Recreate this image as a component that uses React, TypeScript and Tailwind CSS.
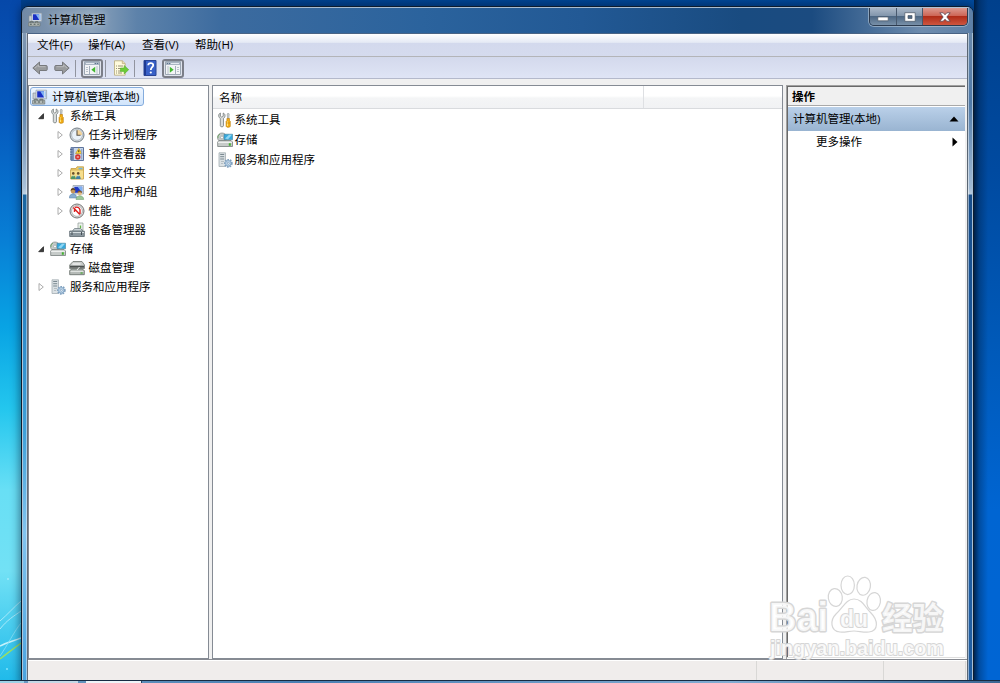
import React from 'react';

type IconProps = { className?: string };

interface TreeNode {
  label: string;
  icon: React.FC<IconProps>;
  level: number;
  arrow?: 'open' | 'closed';
  selected?: boolean;
}

/* ===================== ICONS ===================== */

const ComputerIcon: React.FC<IconProps> = ({ className }) => (
  <svg viewBox="0 0 16 16" className={className}>
    <path d="M1 4h4v6H1z" fill="#c9cfd4" stroke="#7f878d" strokeWidth=".6" />
    <path d="M4 1.2h10.6v8.6H4z" fill="#e4e9ee" stroke="#8d9aa8" strokeWidth=".7" />
    <path d="M5.2 2.3h6.8v6.2H5.2z" fill="#1a2fc4" />
    <path d="M8.2 2.3H12v6.2z" fill="#7fb2f4" />
    <path d="M12.6 2.3h1.4v6.2h-1.4z" fill="#a9c8ee" />
    <path d="M7 10h5l1 1.6H6z" fill="#a7b1ba" />
    <path d="M.6 11.4h12.2V15H.6z" fill="#b2b9b6" stroke="#6e7673" strokeWidth=".7" />
    <path d="M2.4 11.5v-1.2h3v1.2M8 11.5v-1.2h2.6v1.2" fill="none" stroke="#687069" />
    <path d="M2 13h2M6 13h2M10 13h1.5" stroke="#4f5b57" strokeWidth="1.2" />
  </svg>
);

const ToolsIcon: React.FC<IconProps> = ({ className }) => (
  <svg viewBox="0 0 16 16" className={className}>
    <path
      d="M3.4 1v3.2l1.400.9 1.400-.9V1c1.500.700 2 1.800 1.800 3.200-.1 1-.7 1.800-1.500 2.200v7.400c0 1.400-3.200 1.400-3.200 0V6.400C2.400 6 1.800 5.200 1.700 4.200c-.2-1.400.300-2.500 1.700-3.200z"
      fill="#d9dcdb"
      stroke="#777d7d"
      strokeWidth=".8"
    />
    <path d="M11.200 1l1 1-.4 4.500h-1.200L10.200 2z" fill="#cfd3d4" stroke="#8a9090" strokeWidth=".6" />
    <path d="M9.900 6.500h2.600v2l.8.800v5c0 1.400-4.200 1.400-4.200 0v-5l.8-.8z" fill="#f3ae16" stroke="#b97a0b" strokeWidth=".6" />
    <path d="M10.500 9.500v4.500" stroke="#ffe37c" />
    <path d="M9.500 11h3.500" stroke="#c27f0c" strokeWidth=".6" />
  </svg>
);

const ClockIcon: React.FC<IconProps> = ({ className }) => (
  <svg viewBox="0 0 16 16" className={className}>
    <circle cx="8" cy="8" r="7" fill="#d5dade" stroke="#757e86" />
    <circle cx="8" cy="8" r="5.400" fill="#e9f1f9" stroke="#a8b2ba" strokeWidth=".8" />
    <path d="M8 8V2.800A5.200 5.200 0 0 1 13.200 8z" fill="#f4d49a" />
    <path d="M8 3.300V8.300h3.600" fill="none" stroke="#5b5347" strokeWidth="1.100" />
  </svg>
);

const EventIcon: React.FC<IconProps> = ({ className }) => (
  <svg viewBox="0 0 16 16" className={className}>
    <path d="M2 1.500h12.500v13H2z" fill="#c5d4e9" stroke="#5d739b" />
    <path d="M2 1.500h3v13H2z" fill="#7b90b7" />
    <path d="M1 3.500h2.500M1 6h2.500M1 8.500h2.500M1 11h2.500M1 13h2.500" stroke="#4a6089" strokeWidth=".8" />
    <path d="M9.800 2.400l3.200 5.200H6.600z" fill="#ffd63a" stroke="#b78c16" strokeWidth=".6" />
    <path d="M9.800 4.200v2" stroke="#3b300f" />
    <circle cx="8.800" cy="11" r="2.700" fill="#d5322c" />
    <path d="M7.700 11h2.200" stroke="#fff" strokeWidth=".9" />
    <path d="M12.700 3v10.500" stroke="#8ca4c9" />
  </svg>
);

const SharedFolderIcon: React.FC<IconProps> = ({ className }) => (
  <svg viewBox="0 0 16 16" className={className}>
    <path d="M2 3.500h5l1-1.700h6.500v12H2z" fill="#f0cf68" stroke="#c39c44" strokeWidth=".8" />
    <path d="M9.500 2.800h4v1.600h-4z" fill="#74b6de" />
    <path d="M1.500 5h13v9h-13z" fill="#f7de8c" stroke="#c9a44c" strokeWidth=".7" />
    <circle cx="4.300" cy="8.400" r="1.300" fill="#6a512c" />
    <path d="M1.800 14c.2-4.600 4.800-4.600 5 0z" fill="#4d9466" />
    <circle cx="9.200" cy="8.400" r="1.300" fill="#6a512c" />
    <path d="M6.900 14c.2-4.600 4.600-4.600 4.800 0z" fill="#417fa5" />
    <path d="M3.300 10.800h2M8.200 10.800h2" stroke="#e7efe0" strokeWidth=".8" />
  </svg>
);

const UsersIcon: React.FC<IconProps> = ({ className }) => (
  <svg viewBox="0 0 16 16" className={className}>
    <path d="M4 1.500h10.500v8.500H4z" fill="#dce4ec" stroke="#8e9ba8" strokeWidth=".7" />
    <path d="M5.300 2.700h7.900v6H5.300z" fill="#1e37c4" />
    <path d="M8.500 2.700h4.700v6z" fill="#7eb1f3" />
    <circle cx="4" cy="7" r="2.400" fill="#c79658" />
    <path d="M1.700 7c-.3-4 5-4 4.600 0-1.200-1.400-3-1.600-4.600 0z" fill="#574023" />
    <path d="M.3 14c0-5.600 7.400-5.600 7.400 0z" fill="#86aed1" stroke="#5a7fa4" strokeWidth=".5" />
    <circle cx="10.800" cy="9.300" r="2.100" fill="#e2bd8a" />
    <path d="M8.600 9c0-3.200 4.600-3.200 4.400 0-1.200-1-3-1.200-4.400 0z" fill="#875c28" />
    <path d="M7 15.500c0-5 7.700-5 7.700 0z" fill="#9bc798" stroke="#69976a" strokeWidth=".5" />
  </svg>
);

const PerformanceIcon: React.FC<IconProps> = ({ className }) => (
  <svg viewBox="0 0 16 16" className={className}>
    <circle cx="8" cy="8" r="7" fill="#e0e0e0" stroke="#777" />
    <circle cx="8" cy="8" r="5.400" fill="#fff" stroke="#a4a4a4" strokeWidth=".8" />
    <path d="M4.300 4.500l6.500 7M5.500 9V5.500M6 4.500c2-1 4.500 0 5 2.500v4" fill="none" stroke="#dc2020" strokeWidth="1.400" />
  </svg>
);

const DeviceIcon: React.FC<IconProps> = ({ className }) => (
  <svg viewBox="0 0 16 16" className={className}>
    <path d="M9 1h5v7H9z" fill="#edf1ee" stroke="#8e9994" strokeWidth=".7" />
    <path d="M11.500 3.500v3" stroke="#61b644" strokeWidth="1.300" />
    <path d="M3.500 9l2-2.500h6l2.500 2.500" fill="#c9d2d6" stroke="#758087" strokeWidth=".8" />
    <path d="M.7 9h14.600v5.500H.7z" fill="#8c989f" stroke="#5c676e" strokeWidth=".8" />
    <path d="M1 10.500h14" stroke="#d5dde0" />
    <path d="M3 10v3M12.500 10v3" stroke="#465057" />
  </svg>
);

const StorageIcon: React.FC<IconProps> = ({ className }) => (
  <svg viewBox="0 0 16 16" className={className}>
    <circle cx="5" cy="5.500" r="4.500" fill="#c4cac8" stroke="#8b9290" strokeWidth=".8" />
    <circle cx="5" cy="5.500" r="1.400" fill="#fff" stroke="#8f9694" strokeWidth=".6" />
    <path d="M1 6V4l2-2" fill="none" stroke="#76a86e" />
    <path d="M7 2.200h8.500v5.600H7z" fill="#35a9de" stroke="#4a8199" strokeWidth=".6" />
    <path d="M8 6.500l4-3.800h3L11 7.200z" fill="#8ed6f3" />
    <path d="M2 8.500h12l1.500 1.500v4.500H.7V10z" fill="#c6cbc9" stroke="#777f7d" strokeWidth=".8" />
    <path d="M1 10.300h14" stroke="#f7f8f8" />
    <path d="M11.800 11.300h2v2.400h-2z" fill="#42b12e" />
  </svg>
);

const DiskIcon: React.FC<IconProps> = ({ className }) => (
  <svg viewBox="0 0 16 16" className={className}>
    <path d="M4 1.500h9L15.500 5v3.500H.7V5z" fill="#c9ccca" stroke="#6d736f" strokeWidth=".8" />
    <path d="M3.500 4h8" stroke="#fff" />
    <path d="M1 5.700h14v2H1z" fill="#4c514f" />
    <path d="M3 9h10l2.300 1.500v4.200H.7v-4.200z" fill="#b5bab7" stroke="#626965" strokeWidth=".8" />
    <path d="M8 10l2.500-3" stroke="#eceeed" />
    <path d="M1.500 11.500h13" stroke="#dfe2e0" />
    <path d="M11.500 13h2.200" stroke="#48a838" strokeWidth="1.200" />
  </svg>
);

const ServicesIcon: React.FC<IconProps> = ({ className }) => (
  <svg viewBox="0 0 16 16" className={className}>
    <path d="M2 .8h6.500v13.700H2z" fill="#dbe1e4" stroke="#a3adb3" strokeWidth=".8" />
    <path d="M3.200 2.500h4M3.200 4.700h4M3.200 7h4" stroke="#7b8991" />
    <path d="M4 9.500h3M4 11.500h2" stroke="#b5bec3" />
    <circle cx="11.300" cy="11.300" r="3.600" fill="#c8dcec" stroke="#7f9fbd" strokeWidth="1.600" strokeDasharray="1.600 1" />
    <circle cx="11.300" cy="11.300" r="2.700" fill="#c6dbed" stroke="#7c9fc0" strokeWidth=".8" />
    <circle cx="11.300" cy="11.300" r="1" fill="#fff" stroke="#6289ae" strokeWidth=".6" />
  </svg>
);

const ArrowIcon: React.FC<IconProps> = ({ className }) => (
  <svg viewBox="0 0 16 14" className={className}>
    <path
      d="M.8 7l6.700-6v3.500h6.700c.7 0 1 .4 1 1v3c0 .7-.3 1-1 1H7.500V13z"
      fill="#999b9d"
      stroke="#77797d"
    />
    <path d="M3 7l3.500-3v1.700h7" fill="none" stroke="#b9babc" />
  </svg>
);

const PanelIcon: React.FC<IconProps> = ({ className }) => (
  <svg viewBox="0 0 16 14" className={className}>
    <path d="M.5.500h15v13H.5z" fill="#f3f4f6" stroke="#9ca7b3" />
    <path d="M1 1h14v3H1z" fill="#a9b4c2" />
    <path d="M2 2.500h8" stroke="#e4e9ef" />
    <path d="M11 2.500h1M13 2.500h1" stroke="#5c748f" />
    <path d="M5.500 5v8.500" stroke="#a3aebb" />
    <path d="M2 6.500h2M2 8.500h2M2 10.500h2" stroke="#b9c2cc" />
    <path d="M11.200 5.700v6L7.300 8.700z" fill="#43b831" />
    <path d="M13 5v8" stroke="#b6c0ca" />
  </svg>
);

const ExportIcon: React.FC<IconProps> = ({ className }) => (
  <svg viewBox="0 0 16 16" className={className}>
    <path d="M1.500.8h7.800l2.900 2.800v11.600H1.500z" fill="#fffbdc" stroke="#b6a978" strokeWidth=".8" />
    <path d="M9.300.8v2.800h2.900" fill="#e9ddad" stroke="#b6a978" strokeWidth=".7" />
    <path d="M3 6h1M5 6h5M3 8.500h1M5 8.500h3M3 11h1M5 11h3M3 13h1M5 13h4" stroke="#8e876e" strokeWidth=".9" />
    <path d="M7.500 8h3.700V5.500l4.500 4.200-4.500 4.200v-2.500H7.500z" fill="#6ccc38" stroke="#55b02f" strokeWidth=".6" />
  </svg>
);

const HelpIcon: React.FC<IconProps> = ({ className }) => (
  <svg viewBox="0 0 14 16" className={className}>
    <path d="M1 .500h12v15H1z" fill="#3860c8" stroke="#294495" />
    <path d="M1 1h2v14H1z" fill="#1e3a92" />
    <path d="M5.200 5.200c.1-3 5.300-2.800 5 .2C10 7.200 7.800 7.500 7.800 10" fill="none" stroke="#fff" strokeWidth="1.800" />
    <circle cx="7.800" cy="12.500" r="1.100" fill="#fff" />
  </svg>
);

const ExpandArrow: React.FC<{ state?: 'open' | 'closed' }> = ({ state }) => (
  <svg viewBox="0 0 8 8" className="w-2 h-2 shrink-0">
    {state === 'open' && <path d="M6.500 1.700v5H1.700z" fill="#3c3c3c" stroke="#262626" strokeWidth=".8" />}
    {state === 'closed' && <path d="M2 .500l4.300 3.500L2 7.500z" fill="#fff" stroke="#a3a3a3" strokeWidth=".9" />}
  </svg>
);

/* ===================== DATA ===================== */

const menus = [
  { label: '文件(F)', width: 'w-[51px]' },
  { label: '操作(A)', width: 'w-[54px]' },
  { label: '查看(V)', width: 'w-[53px]' },
  { label: '帮助(H)', width: 'w-[54px]' },
];

const tree: TreeNode[] = [
  { label: '计算机管理(本地)', icon: ComputerIcon, level: 0, selected: true },
  { label: '系统工具', icon: ToolsIcon, level: 1, arrow: 'open' },
  { label: '任务计划程序', icon: ClockIcon, level: 2, arrow: 'closed' },
  { label: '事件查看器', icon: EventIcon, level: 2, arrow: 'closed' },
  { label: '共享文件夹', icon: SharedFolderIcon, level: 2, arrow: 'closed' },
  { label: '本地用户和组', icon: UsersIcon, level: 2, arrow: 'closed' },
  { label: '性能', icon: PerformanceIcon, level: 2, arrow: 'closed' },
  { label: '设备管理器', icon: DeviceIcon, level: 2 },
  { label: '存储', icon: StorageIcon, level: 1, arrow: 'open' },
  { label: '磁盘管理', icon: DiskIcon, level: 2 },
  { label: '服务和应用程序', icon: ServicesIcon, level: 1, arrow: 'closed' },
];

const items = [
  { label: '系统工具', icon: ToolsIcon },
  { label: '存储', icon: StorageIcon },
  { label: '服务和应用程序', icon: ServicesIcon },
];

/* ===================== WINDOW PARTS ===================== */

const TitleBar: React.FC = () => (
  <div className="h-[26px] shrink-0 flex items-start justify-between bg-[linear-gradient(90deg,#7189a5_0px,#8ba2ba_70px,#5d82aa_115px,#3c6b9f_200px,#2b639d_400px,#225995_560px,#194b80_720px,#1b4b80_790px,#6e8cae_900px,#5d7fa6_953px)] border-t border-[#a9bccf]">
    <div className="flex items-center gap-[5px] pl-[6px] pt-[3px]">
      <ComputerIcon className="w-[15px] h-[15px]" />
      <span className="leading-[17px] text-black [text-shadow:0_0_6px_#ffffff90]">计算机管理</span>
    </div>
    <div className="flex h-[18px] mr-[5px] border border-t-0 border-[#2c3b4f] rounded-b-[5px] overflow-hidden shadow-[0_0_0_1px_#b4c5d5a0]">
      <button className="w-[27px] flex items-center justify-center border-r border-[#48596e] bg-[linear-gradient(#a9b7c7,#8195ab_47%,#4d6783_50%,#7890a9)]">
        <svg viewBox="0 0 12 10" className="w-3 h-2.5 mt-px"><path d="M.8 5h10.400v3.800H.8z" fill="#fff" stroke="#4c5765" strokeWidth=".7" /></svg>
      </button>
      <button className="w-[26px] flex items-center justify-center border-r border-[#48596e] bg-[linear-gradient(#a9b7c7,#8195ab_47%,#4d6783_50%,#7890a9)]">
        <svg viewBox="0 0 12 10" className="w-3 h-2.5"><path d="M.800.700h10.400v8.600H.800zM4 3.500v3h4v-3z" fill="#fff" fillRule="evenodd" stroke="#4c5765" strokeWidth=".7" /></svg>
      </button>
      <button className="w-[44px] flex items-center justify-center bg-[linear-gradient(#dc9a90,#cd6454_47%,#b02c18_50%,#ce5640)]">
        <svg viewBox="0 0 12 10" className="w-3 h-2.5"><path d="M.8.800h3.400L6 2.800 7.800.800h3.400L7.800 5l3.400 4.200H7.800L6 7.200 4.200 9.200H.8L4.200 5z" fill="#fff" stroke="#5a4450" strokeWidth=".8" /></svg>
      </button>
    </div>
  </div>
);

const Toolbar: React.FC = () => (
  <div className="h-[22px] shrink-0 flex items-center pl-[4px] pt-px bg-[linear-gradient(#d3d9ec,#dfe4f5)] border-b border-[#b4b9cb]">
    <ArrowIcon className="w-4 h-[14px]" />
    <ArrowIcon className="w-4 h-[14px] ml-[6px] -scale-x-100" />
    <div className="w-px h-[17px] bg-[#91949f] ml-[5px]" />
    <div className="w-[22px] h-[19px] ml-[5px] flex items-center justify-center rounded-[3px] border-2 border-[#7b7e88] bg-[#dfe3ed]">
      <PanelIcon className="w-4 h-[14px]" />
    </div>
    <div className="w-px h-[17px] bg-[#91949f] ml-[2px]" />
    <ExportIcon className="w-[16px] h-[16px] ml-[7px]" />
    <div className="w-px h-[17px] bg-[#91949f] ml-[5px]" />
    <HelpIcon className="w-[14px] h-4 ml-[8px]" />
    <div className="w-[22px] h-[19px] ml-[5px] flex items-center justify-center rounded-[3px] border-2 border-[#7b7e88] bg-[#dfe3ed]">
      <PanelIcon className="w-4 h-[14px] -scale-x-100" />
    </div>
  </div>
);

const TreeRow: React.FC<{ node: TreeNode }> = ({ node }) => {
  const Icon = node.icon;

  if (node.selected) {
    return (
      <div className="h-[19.1px] flex items-center pl-px">
        <div className="h-[19px] w-[114px] flex items-center gap-[4px] pl-px rounded-[3px] border border-[#84acdd] bg-[linear-gradient(#eef5fe,#d0e4fb)]">
          <Icon className="w-4 h-4 shrink-0" />
          <span>{node.label}</span>
        </div>
      </div>
    );
  }

  return (
    <div className={`h-[19.1px] flex items-center ${node.level === 1 ? 'pl-[8px]' : 'pl-[26.5px]'}`}>
      <ExpandArrow state={node.arrow} />
      <Icon className="w-4 h-4 ml-[5px] mr-[4px] shrink-0" />
      <span>{node.label}</span>
    </div>
  );
};

const ListPane: React.FC = () => (
  <div className="w-[571px] shrink-0 bg-white border border-[#858b94]">
    <div className="h-[23px] flex border-b border-[#d9dbde] bg-[linear-gradient(#ffffff,#ffffff_45%,#f4f5f6_55%,#f1f2f4)]">
      <div className="w-[431px] pl-[6px] leading-[24px] border-r border-[#dee0e3]">名称</div>
    </div>
    <div className="pt-px">
      {items.map(({ label, icon: Icon }) => (
        <div key={label} className="h-[20.200px] flex items-center pl-[4px]">
          <Icon className="w-4 h-4 shrink-0 mr-[1.500px]" />
          <span>{label}</span>
        </div>
      ))}
    </div>
  </div>
);

const ActionPane: React.FC = () => (
  <div className="w-[179px] shrink-0 flex flex-col border-t border-l border-[#a0a0a0] bg-white">
    <div className="flex-1 border-t border-l border-[#696969]">
      <div className="h-[19px] pl-[4px] leading-[20px] font-bold bg-[#f0f0f0] border-b border-[#a9a9a9]">操作</div>
      <div className="h-[24px] mt-px pl-[5px] pr-[6px] flex items-center justify-between bg-[linear-gradient(#bad0e9,#99b4d1)]">
        <span>计算机管理(本地)</span>
        <svg viewBox="0 0 10 6" className="w-[10px] h-[6px]"><path d="M5 .500L9.500 5.500H.5z" /></svg>
      </div>
      <div className="h-[22px] pl-[28px] pr-[7px] flex items-center justify-between">
        <span>更多操作</span>
        <svg viewBox="0 0 6 10" className="w-[6px] h-[10px]"><path d="M.500 .500L5.500 5 .500 9.500z" /></svg>
      </div>
    </div>
    <div className="h-px bg-[#dedede]" />
    <div className="h-px bg-white" />
  </div>
);

const StatusBar: React.FC = () => (
  <div className="h-[20px] shrink-0 flex border-t border-white bg-[#f0edec]">
    <div className="w-[729px] border-r border-[#d9d8d6]" />
    <div className="w-[127px] border-r border-[#d9d8d6]" />
    <div className="w-[82px] border-r border-[#d9d8d6]" />
  </div>
);

const Watermark: React.FC = () => (
  <svg
    viewBox="0 0 190 95"
    className="absolute left-[760px] top-[570px] w-[190px] h-[95px] pointer-events-none"
    fill="#ffffff"
    fillOpacity=".8"
    stroke="#d6d6d6"
    strokeWidth="1.200"
    fontFamily="'Liberation Sans', 'Noto Sans CJK SC', sans-serif"
  >
    <ellipse cx="75.300" cy="27.500" rx="7" ry="9" transform="rotate(-8 75.300 27.500)" />
    <ellipse cx="87.700" cy="15.300" rx="6.700" ry="9.300" />
    <ellipse cx="103.700" cy="16.300" rx="6.700" ry="9" transform="rotate(10 103.700 16.300)" />
    <ellipse cx="113.700" cy="31.500" rx="6.700" ry="9" transform="rotate(10 113.700 31.500)" />
    <path d="M94 29c8 0 11 8 17 14 7 7 8 18-2 19-6 .5-10-1-15-1s-9 1.500-14 1c-10-1-10-12-4-18 7-6 10-15 18-15z" />
    <g paintOrder="stroke" strokeLinejoin="round" strokeWidth="3">
      <text x="9" y="61" fontSize="40" fontWeight="700" textLength="59" lengthAdjust="spacingAndGlyphs">Bai</text>
      <text x="80" y="57" fontSize="23" fontWeight="700" textLength="28" lengthAdjust="spacingAndGlyphs" strokeWidth="2">du</text>
      <text x="122" y="59" fontSize="31" fontWeight="700" textLength="61" lengthAdjust="spacingAndGlyphs">经验</text>
      <text x="10" y="85" fontSize="20" fontWeight="700" textLength="174" lengthAdjust="spacingAndGlyphs" strokeWidth="1.800">jingyan.baidu.com</text>
    </g>
  </svg>
);

/* ===================== MAIN ===================== */

const App: React.FC = () => {
  return (
    <div className="relative w-[1000px] h-[683px] overflow-hidden flex flex-col text-[11.5px] leading-[18px] text-black whitespace-nowrap font-['Open_Sans','Noto_Sans_CJK_SC',sans-serif] bg-[linear-gradient(90deg,#00408c,#004b9e)]">
      <div className="h-[680px] shrink-0 flex overflow-hidden">
        {/* wallpaper, left of the window */}
        <div className="w-[21px] shrink-0 bg-[linear-gradient(#0648a9,#0559bd_17%,#087ed5_35%,#08a3e4_48%,#23c6ee_60%,#68dff5_72%,#72e1f5_84%,#20baea)]">
          <svg viewBox="0 0 21 680" className="w-[21px] h-[680px]" fill="none">
            <path d="M0 621C8 614 14 607 21 601M0 629C7 620 14 616 21 611" stroke="#a9eafa" strokeWidth="1" />
            <path d="M0 646C8 642 14 641 21 638" stroke="#c7f2fb" strokeWidth="1.500" />
            <path d="M0 659C8 653 14 648 21 643" stroke="#98de67" strokeWidth="1.500" />
            <path d="M0 656C7 646 15 630 21 623" stroke="#8ce2f8" strokeWidth=".8" />
            <circle cx="8" cy="579" r=".8" fill="#c5f5ff" />
            <circle cx="7" cy="669" r="1" fill="#82e5fb" />
          </svg>
        </div>

        <div className="w-[953px] h-[680px] shrink-0 mt-[6px] flex flex-col rounded-t-[7px] overflow-clip border border-[#0d1c2e] shadow-[0_0_10px_1px_#00153390]">
          <TitleBar />
          <div className="flex-1 flex min-h-0">
            <div className="w-[6px] shrink-0 border-x border-r-[#656c78] border-l-[#b0c6d9] bg-[linear-gradient(#8299b3_0px,#5a80aa_70px,#a9c1d9_155px,#c0d3e4_161px,#19649f_162px,#2d8bca_300px,#3fa1d9_400px,#82c4ef_500px,#4aa3df_646px)]">
              <div className="w-px h-full ml-auto bg-[#ffffff70]" />
            </div>

            <div className="w-[939px] shrink-0 h-[647px] flex flex-col bg-[#f0f0f0] border-t border-[#4a6485]">
              <div className="h-[23px] shrink-0 flex items-center bg-[linear-gradient(#ffffff,#e5eaf5_38%,#d3d9ed_42%,#d5dbee)] border-b border-[#b3b4b8] pl-[9px]">
                {menus.map(menu => (
                  <div key={menu.label} className={menu.width}>{menu.label}</div>
                ))}
              </div>
              <Toolbar />

              <div className="flex-1 flex gap-[3px] pt-[6px] min-h-0 border-b border-[#888b92]">
                <div className="w-[181px] shrink-0 pt-px bg-white border border-[#858b94]">
                  {tree.map(node => (
                    <TreeRow key={node.label} node={node} />
                  ))}
                </div>
                <ListPane />
                <ActionPane />
              </div>
              <StatusBar />
            </div>

            <div className="w-[6px] shrink-0 border-x border-l-[#5a6673] border-r-[#a9c0d5] bg-[linear-gradient(#6888ab_0px,#507aa8_70px,#a1bad3_155px,#b8cbdd_161px,#174d8a_162px,#1b5da5_400px,#225fa2_646px)]">
              <div className="w-px h-full bg-[#ffffff80]" />
            </div>
          </div>
        </div>

        <div className="w-[26px] shrink-0 bg-[linear-gradient(#00408c,#004aa0_25%,#0059b8_50%,#0065d2_75%,#0065d4)]">
          <div className="w-full h-full bg-[linear-gradient(90deg,#00142ecc,#00142e50_5px,#00142e00_14px)]" />
        </div>
      </div>

      {/* top edge of the taskbar */}
      <div className="h-[3px] shrink-0 flex border-t border-[#172b42] bg-[linear-gradient(90deg,#6b9bc2,#4a7fb3_30%,#82acd2_73%,#3b6693)]">
        <div className="w-[24px] bg-[#9ed1e6]" />
        <div className="w-[50px] ml-[4px] bg-[#c4d8e6]" />
        <div className="w-[56px] ml-[8px] bg-[#eef4f8] border-r border-[#284565]" />
      </div>

      <Watermark />
    </div>
  );
};

export default App;
